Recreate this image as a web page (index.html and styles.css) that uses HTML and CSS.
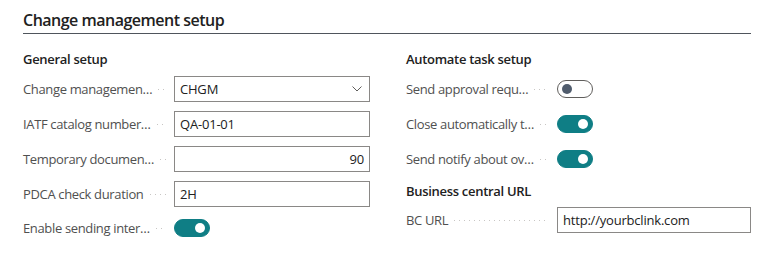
FILE: index.html
```html
<!doctype html>
<html lang="en">
  <head>
    <meta charset="UTF-8" />
    <title>Change management setup</title>
    <link rel="stylesheet" href="styles.css">
  </head>
  <body>
    <div class="page">
      <h1 class="page-title">Change management setup</h1>

      <div class="columns">
        <section class="group">
          <h2 class="group-title">General setup</h2>

          <div class="field">
            <span class="label">Change managemen…</span>
            <span class="leader"></span>
            <div class="input select">
              <span>CHGM</span>
              <svg class="chevron" viewBox="0 0 10 6"><path d="M0.5 0.5 L5 5 L9.5 0.5" /></svg>
            </div>
          </div>

          <div class="field">
            <span class="label">IATF catalog number…</span>
            <span class="leader"></span>
            <div class="input">QA-01-01</div>
          </div>

          <div class="field">
            <span class="label">Temporary documen…</span>
            <span class="leader"></span>
            <div class="input number">90</div>
          </div>

          <div class="field">
            <span class="label">PDCA check duration</span>
            <span class="leader"></span>
            <div class="input">2H</div>
          </div>

          <div class="field field-toggle">
            <span class="label">Enable sending inter…</span>
            <span class="leader"></span>
            <div class="control"><span class="toggle on"></span></div>
          </div>
        </section>

        <section class="group">
          <h2 class="group-title">Automate task setup</h2>

          <div class="field field-toggle">
            <span class="label">Send approval requ…</span>
            <span class="leader"></span>
            <div class="control"><span class="toggle"></span></div>
          </div>

          <div class="field field-toggle">
            <span class="label">Close automatically t…</span>
            <span class="leader"></span>
            <div class="control"><span class="toggle on"></span></div>
          </div>

          <div class="field field-toggle">
            <span class="label">Send notify about ov…</span>
            <span class="leader"></span>
            <div class="control"><span class="toggle on"></span></div>
          </div>

          <h2 class="group-title sub">Business central URL</h2>

          <div class="field">
            <span class="label">BC URL</span>
            <span class="leader"></span>
            <div class="input">http://yourbclink.com</div>
          </div>
        </section>
      </div>
    </div>
  </body>
</html>
```

FILE: styles.css
```css
* {
  margin: 0;
  padding: 0;
  box-sizing: border-box;
}

html,
body {
  background: #ffffff;
  font-family: 'Open Sans', 'Noto Sans', sans-serif;
  color: #212121;
}

.page {
  padding: 0 8px 0 23px;
}

.page-title {
  font-size: 16px;
  font-weight: 600;
  line-height: 22px;
  letter-spacing: -0.5px;
  padding-top: 9px;
  padding-bottom: 2px;
  border-bottom: 1px solid #4f555c;
}

.columns {
  display: grid;
  grid-template-columns: 347px 345px;
  column-gap: 36px;
  padding-top: 15px;
}

.group-title {
  font-size: 13px;
  font-weight: 600;
  line-height: 20px;
  letter-spacing: -0.3px;
  margin-bottom: 7px;
}

.group-title.sub {
  margin-top: 2px;
  margin-bottom: 6px;
}

.field {
  display: flex;
  align-items: center;
  height: 26px;
  margin-bottom: 9px;
}

.field-toggle:last-child {
  height: 24px;
}

.label {
  font-size: 13px;
  letter-spacing: -0.35px;
  color: #505050;
  white-space: nowrap;
}

.leader {
  flex: 1;
  height: 1px;
  margin: 1px 8px 0 6px;
  background: linear-gradient(to right, #c8c6c4 1px, transparent 1px) repeat-x;
  background-size: 5px 1px;
}

.input,
.control {
  flex: 0 0 auto;
  width: 196px;
}

.input {
  height: 26px;
  border: 1px solid #8a8886;
  padding: 0 5px;
  font-size: 13px;
  letter-spacing: -0.2px;
  line-height: 24px;
  color: #212121;
  white-space: nowrap;
}

.group:last-child .input,
.group:last-child .control {
  width: 194px;
}

.select {
  display: flex;
  align-items: center;
  justify-content: space-between;
}

.chevron {
  width: 10px;
  height: 6px;
  margin-right: 2px;
  fill: none;
  stroke: #605e5c;
  stroke-width: 1;
}

.number {
  text-align: right;
}

.toggle {
  display: block;
  position: relative;
  width: 36px;
  height: 18px;
  border-radius: 9px;
  border: 1px solid #605e5c;
  background: #ffffff;
}

.toggle::after {
  content: '';
  position: absolute;
  top: 3px;
  left: 4px;
  width: 10px;
  height: 10px;
  border-radius: 50%;
  background: #505c6d;
}

.toggle.on {
  background: #0f7e85;
  border-color: #0f7e85;
}

.toggle.on::after {
  left: auto;
  right: 4px;
  background: #ffffff;
}
```
